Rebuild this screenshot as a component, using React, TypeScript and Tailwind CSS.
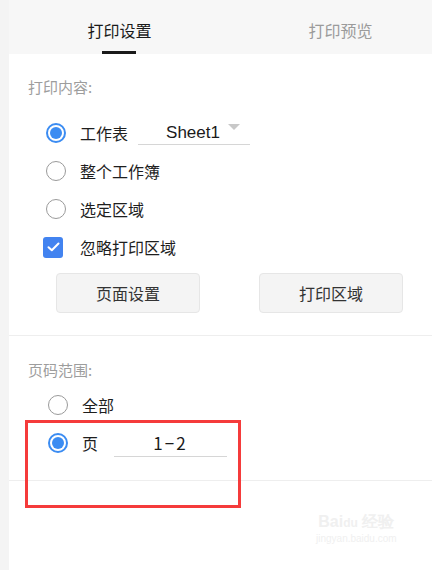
import React from 'react';

const cjk = { fontFamily: '"Noto Sans CJK SC", "Noto Sans", sans-serif' };

const Radio: React.FC<{ checked?: boolean }> = ({ checked }) =>
  checked ? (
    <span className="w-[20px] h-[20px] rounded-full border-2 border-[#3b8cf2] flex items-center justify-center shrink-0">
      <span className="w-[12px] h-[12px] rounded-full bg-[#3b8cf2]" />
    </span>
  ) : (
    <span className="w-[20px] h-[20px] rounded-full border-[1.5px] border-[#9a9a9a] shrink-0" />
  );

const Checkbox: React.FC = () => (
  <span className="w-[20px] h-[21px] rounded-[3px] bg-[#4283f0] flex items-center justify-center shrink-0">
    <svg width="13" height="10" viewBox="0 0 13 10" fill="none">
      <path d="M1.5 5.2 L4.8 8.3 L11.5 1.5" stroke="#fff" strokeWidth="2" strokeLinecap="round" strokeLinejoin="round" />
    </svg>
  </span>
);

const App: React.FC = () => {
  return (
    <div className="relative w-[432px] h-[570px] bg-[#f4f4f4] flex overflow-hidden text-[#1e1e1e]" style={cjk}>
      <div className="ml-[9px] flex-1 flex flex-col bg-white">
        {/* 顶部标签 */}
        <div className="h-[54px] bg-[#f7f7f7] flex shrink-0">
          <div className="w-[221px] relative flex items-center justify-center">
            <span className="text-[16px] leading-[22px] text-[#1a1a1a] mt-[5px]">打印设置</span>
            <span className="absolute bottom-0 left-[93px] w-[34px] h-[3px] bg-[#1a1a1a]" />
          </div>
          <div className="w-[221px] flex items-center justify-center">
            <span className="text-[16px] leading-[22px] text-[#9b9b9b] mt-[5px]">打印预览</span>
          </div>
        </div>

        {/* 打印内容 */}
        <div className="pt-[23px] pb-[22px] border-b border-[#eeeeee]">
          <div className="pl-[19px] text-[15px] leading-[20px] text-[#9d9d9d]">打印内容:</div>
          <div className="mt-[17px] pl-[37px] flex flex-col">
            <div className="h-[38px] flex items-center">
              <Radio checked />
              <span className="ml-[14px] text-[16px]">工作表</span>
              <div className="ml-[10px] w-[112px] h-[24px] relative border-b border-[#d6d6d6] flex items-center justify-center">
                <span className="text-[17px] text-[#1a1a1a] ml-[-2px]" style={{ fontFamily: '"Liberation Sans", Arial, sans-serif' }}>
                  Sheet1
                </span>
                <svg className="absolute right-[10px] top-[3px]" width="12" height="6" viewBox="0 0 12 6">
                  <path d="M0 0 H12 L6 6 Z" fill="#c8c8c8" />
                </svg>
              </div>
            </div>
            <div className="h-[38px] flex items-center">
              <Radio />
              <span className="ml-[14px] text-[16px]">整个工作簿</span>
            </div>
            <div className="h-[38px] flex items-center">
              <Radio />
              <span className="ml-[14px] text-[16px]">选定区域</span>
            </div>
            <div className="h-[38px] flex items-center -ml-[3px]">
              <Checkbox />
              <span className="ml-[17px] text-[16px]">忽略打印区域</span>
            </div>
          </div>
          <div className="mt-[7px] pl-[47px] flex gap-[59px]">
            <button className="w-[144px] h-[40px] rounded-[4px] bg-[#f4f4f4] border border-[#e6e6e6] text-[16px] text-[#333]">
              页面设置
            </button>
            <button className="w-[144px] h-[40px] rounded-[4px] bg-[#f4f4f4] border border-[#e6e6e6] text-[16px] text-[#333]">
              打印区域
            </button>
          </div>
        </div>

        {/* 页码范围 */}
        <div className="pt-[24px] pb-[18px] border-b border-[#eeeeee]">
          <div className="pl-[19px] text-[15px] leading-[20px] text-[#9d9d9d]">页码范围:</div>
          <div className="mt-[6px] pl-[39px] flex flex-col">
            <div className="h-[38px] flex items-center">
              <Radio />
              <span className="ml-[14px] text-[16px]">全部</span>
            </div>
            <div className="h-[38px] flex items-center">
              <Radio checked />
              <span className="ml-[14px] text-[16px]">页</span>
              <div className="ml-[16px] w-[113px] h-[28px] border-b border-[#d6d6d6] flex items-center justify-center">
                <span className="text-[17px] text-[#1a1a1a] tracking-[2px]">1−2</span>
              </div>
            </div>
          </div>
        </div>
      </div>

      {/* 标注框 */}
      <div className="absolute left-[25px] top-[420px] w-[216px] h-[88px] border-[3px] border-[#f53b3b]" />

      {/* 水印 */}
      <div className="absolute left-[316px] top-[514px] flex flex-col items-center text-[#f0f0f0] leading-none">
        <span className="text-[16px] font-bold" style={{ fontFamily: '"Liberation Sans", Arial, sans-serif' }}>
          Bai<span className="text-[12px]">du</span> 经验
        </span>
        <span className="text-[10px] mt-[4px]" style={{ fontFamily: '"Liberation Sans", Arial, sans-serif' }}>
          jingyan.baidu.com
        </span>
      </div>
    </div>
  );
};

export default App;
